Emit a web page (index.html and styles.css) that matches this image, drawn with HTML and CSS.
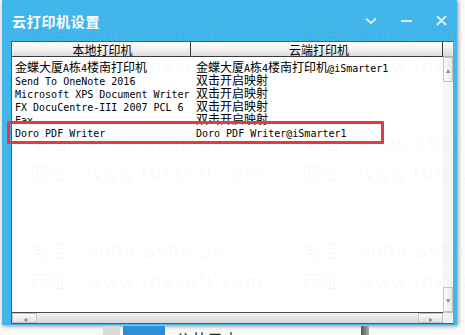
FILE: index.html
```html
<!DOCTYPE html>
<html>
  <head>
    <title>云打印机设置</title>
    <link rel="stylesheet" href="styles.css">
  </head>
  <body>
    <div class="page">
      <div class="window">
        <div class="titlebar">
          <span class="title">云打印机设置</span>
          <div class="controls">
            <svg class="ctl" width="12" height="8" viewBox="0 0 12 8"><polyline points="1,1.5 6,6 11,1.5" fill="none" stroke="#d4eefa" stroke-width="2"/></svg>
            <svg class="ctl" width="11" height="4" viewBox="0 0 11 4"><line x1="0" y1="2" x2="11" y2="2" stroke="#d4eefa" stroke-width="2"/></svg>
            <svg class="ctl" width="11" height="11" viewBox="0 0 11 11"><path d="M1 1 L10 10 M10 1 L1 10" stroke="#d4eefa" stroke-width="2"/></svg>
          </div>
        </div>

        <div class="listbox">
          <div class="list">
            <div class="list-head">
              <div class="col1">本地打印机</div>
              <div class="col2">云端打印机</div>
            </div>
            <div class="list-body">
              <div class="row">
                <div class="col1">金蝶大厦<span class="en">A</span>栋<span class="en">4</span>楼南打印机</div>
                <div class="col2">金蝶大厦<span class="en">A</span>栋<span class="en">4</span>楼南打印机<span class="en">@iSmarter1</span></div>
              </div>
              <div class="row">
                <div class="col1"><span class="en">Send To OneNote 2016</span></div>
                <div class="col2">双击开启映射</div>
              </div>
              <div class="row">
                <div class="col1"><span class="en">Microsoft XPS Document Writer</span></div>
                <div class="col2">双击开启映射</div>
              </div>
              <div class="row">
                <div class="col1"><span class="en">FX DocuCentre-III 2007 PCL 6</span></div>
                <div class="col2">双击开启映射</div>
              </div>
              <div class="row">
                <div class="col1"><span class="en">Fax</span></div>
                <div class="col2">双击开启映射</div>
              </div>
              <div class="row">
                <div class="col1"><span class="en">Doro PDF Writer</span></div>
                <div class="col2"><span class="en">Doro PDF Writer@iSmarter1</span></div>
              </div>
            </div>
          </div>

          <div class="vscroll">
            <div class="vs-head"></div>
            <div class="sb-btn">&#9652;</div>
            <div class="vs-track"></div>
            <div class="sb-btn">&#9662;</div>
          </div>

          <div class="hscroll">
            <div class="sb-btn">&#9666;</div>
            <div class="hs-track"></div>
            <div class="sb-btn">&#9656;</div>
          </div>

          <div class="corner"></div>
        </div>
      </div>

      <div class="taskbar">
        <div class="tb-gray"></div>
        <div class="tb-blue"></div>
        <div class="tb-text">公共云由</div>
        <div class="tb-bar"></div>
      </div>

      <!-- annotation box over the last printer row -->
      <div class="highlight"></div>

      <div class="watermark">
        <div class="wm-row">
          <div class="wm-tile"><div>电话：<span class="wm-en">4006-6500-28</span></div><div>网址：<span class="wm-en">www.tdxsoft.com</span></div></div>
          <div class="wm-tile"><div>电话：<span class="wm-en">4006-6500-28</span></div><div>网址：<span class="wm-en">www.tdxsoft.com</span></div></div>
        </div>
        <div class="wm-row">
          <div class="wm-tile"><div>电话：<span class="wm-en">4006-6500-28</span></div><div>网址：<span class="wm-en">www.tdxsoft.com</span></div></div>
          <div class="wm-tile"><div>电话：<span class="wm-en">4006-6500-28</span></div><div>网址：<span class="wm-en">www.tdxsoft.com</span></div></div>
        </div>
        <div class="wm-row">
          <div class="wm-tile"><div>电话：<span class="wm-en">4006-6500-28</span></div><div>网址：<span class="wm-en">www.tdxsoft.com</span></div></div>
          <div class="wm-tile"><div>电话：<span class="wm-en">4006-6500-28</span></div><div>网址：<span class="wm-en">www.tdxsoft.com</span></div></div>
        </div>
      </div>
    </div>
  </body>
</html>
```

FILE: styles.css
```css
body {
  margin: 0;
  background: #fafafa;
  font-family: "Noto Sans CJK SC", sans-serif;
}

.page {
  position: relative;
  width: 465px;
  height: 335px;
  overflow: hidden;
}

/* Window frame */
.window {
  margin-left: 2px;
  width: 455px;
  height: 325px;
  background: #42b5ea;
  box-shadow: 1px 1px 4px rgba(0, 0, 0, 0.45);
  display: flex;
  flex-direction: column;
}

.titlebar {
  height: 41px;
  display: flex;
  align-items: center;
  padding: 0 10px 0 10px;
}

.title {
  color: #fff;
  font-size: 14px;
  font-weight: 700;
  letter-spacing: 0.7px;
}

.controls {
  margin-left: auto;
  display: flex;
  align-items: center;
  gap: 24px;
}

.ctl {
  display: block;
}

/* List box */
.listbox {
  margin-left: 9px;
  width: 443px;
  height: 283px;
  box-sizing: border-box;
  border: 1px solid #5a5a5a;
  border-right-color: #9a9a9a;
  background: #fff;
  display: grid;
  grid-template-columns: 431px 10px;
  grid-template-rows: 270px 11px;
}

.list {
  overflow: hidden;
}

.list-head {
  display: flex;
  height: 14px;
  border-bottom: 1px solid #3a3a3a;
  background: linear-gradient(#ffffff, #f2f2f2 50%, #dcdcdc);
  font-size: 12px;
  line-height: 15px;
  color: #000;
}

.list-head .col1,
.list-head .col2 {
  text-align: center;
}

.col1 {
  width: 179px;
  flex: none;
  box-sizing: border-box;
  border-right: 1px solid #3a3a3a;
  padding-left: 3px;
  white-space: nowrap;
}

.col2 {
  width: 252px;
  flex: none;
  box-sizing: border-box;
  border-right: 1px solid #3a3a3a;
  padding-left: 5px;
  white-space: nowrap;
}

.list-body {
  padding-top: 3px;
}

.row {
  display: flex;
  height: 13px;
  font-size: 12px;
  line-height: 13px;
  color: #000;
}

.row .col1,
.row .col2 {
  border-right: none;
}

.en {
  font-family: "DejaVu Sans Mono", monospace;
  font-size: 10px;
  color: #000;
}

/* Scrollbars */
.vscroll {
  display: flex;
  flex-direction: column;
  background: #f3f3f3;
}

.vs-head {
  height: 15px;
  background: linear-gradient(#ffffff, #dcdcdc);
  border-bottom: 1px solid #b0b0b0;
  box-sizing: border-box;
}

.vs-track {
  flex: 1;
  background: #f6f6f6;
}

.sb-btn {
  height: 25px;
  display: flex;
  align-items: center;
  justify-content: center;
  font-size: 8px;
  color: #8a8a8a;
  background: linear-gradient(90deg, #fbfbfb, #e9e9e9);
  border: 1px solid #c4c4c4;
  box-sizing: border-box;
}

.hscroll {
  display: flex;
  border-top: 1px solid #4a4a4a;
  background: linear-gradient(#f4f4f4, #d6d6d6);
}

.hscroll .sb-btn {
  width: 25px;
  height: 10px;
  background: linear-gradient(#fbfbfb, #e2e2e2);
}

.hs-track {
  flex: 1;
}

.corner {
  background: #f0f0f0;
  border-top: 1px solid #c4c4c4;
}

/* Desktop strip below the window */
.taskbar {
  display: flex;
  height: 9px;
  margin-top: 1px;
  padding-left: 103px;
  overflow: hidden;
}

.tb-gray {
  width: 17px;
  background: #dadada;
}

.tb-blue {
  width: 42px;
  margin-left: 3px;
  background: #2d8fdc;
}

.tb-text {
  margin-left: 10px;
  font-size: 16px;
  line-height: 26px;
  color: #222;
}

.tb-bar {
  width: 8px;
  margin-left: 122px;
  background: linear-gradient(90deg, #555, #aaa);
}

/* Overlays */
.highlight {
  position: absolute;
  left: 7px;
  top: 121px;
  width: 377px;
  height: 23px;
  border: 3px solid #e33b40;
  box-sizing: border-box;
}

.watermark {
  position: absolute;
  left: 30px;
  top: 20px;
  pointer-events: none;
  color: rgba(0, 0, 0, 0.035);
  font-size: 18px;
  line-height: 29px;
  letter-spacing: 1px;
}

.wm-row {
  display: flex;
  height: 108px;
}

.wm-tile {
  width: 272px;
  white-space: nowrap;
}

.wm-en {
  font-family: "Noto Sans", sans-serif;
  letter-spacing: 2px;
}
```
